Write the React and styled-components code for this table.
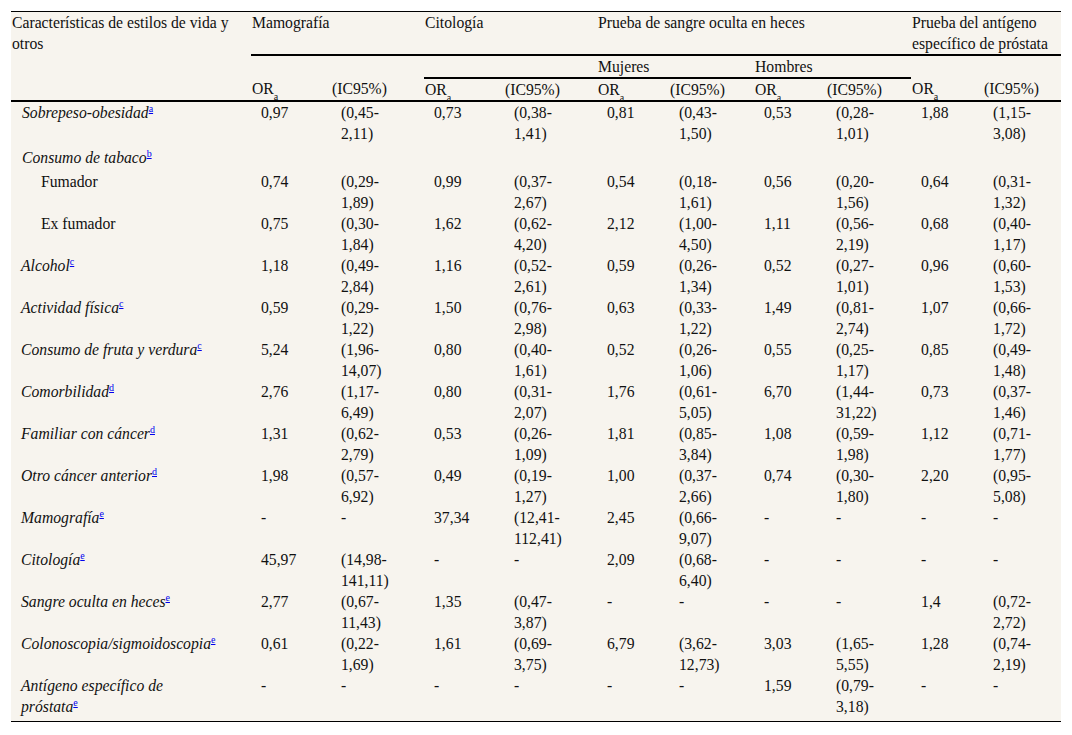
import React from "react";
import styled, { createGlobalStyle } from "styled-components";

const Global = createGlobalStyle`
  html, body { margin: 0; padding: 0; background: #ffffff; }
  body { font-family: "Liberation Serif", "Times New Roman", serif; color: #111; }
`;

const Page = styled.div`
  padding: 11px 11px;
  font-family: "Liberation Serif", "Times New Roman", serif;
`;

const Table = styled.table`
  width: 1050px;
  table-layout: fixed;
  border-collapse: collapse;
  background: #f7f4ee;
  font-family: "Liberation Serif", "Times New Roman", serif;
  font-size: 15.7px;
  line-height: 21px;
  color: #111;
  border-top: 1px solid #000;
  border-bottom: 1px solid #000;
`;

const Th = styled.th`
  font-weight: normal;
  text-align: left;
  vertical-align: top;
  padding: 0 1px;
  font-family: inherit;
  border-bottom: ${(p) => (p.$line ? "2px solid #000" : "none")};
`;

const BodyRow = styled.tr`
  & > td {
    padding-bottom: ${(p) => p.$extra || 0}px;
  }
`;

const Td = styled.td`
  vertical-align: top;
  text-align: left;
  font-family: inherit;
  padding-top: 0;
  padding-left: 10px;
  padding-right: 2px;
`;

const LabelCell = styled(Td)`
  padding-left: ${(p) => p.$indent}px;
  padding-right: 31px;
  font-style: ${(p) => (p.$italic ? "italic" : "normal")};
`;

const Sub = styled.sub`
  font-size: 10px;
  vertical-align: -6px;
  line-height: 0;
`;

const SupLink = styled.a`
  font-size: 10px;
  color: #0000ee;
  text-decoration: underline;
  vertical-align: 6px;
  line-height: 0;
  font-style: normal;
`;

const Ci = styled.span`
  display: inline-block;
  width: 54px;
`;

const cols = [240, 80, 93, 80, 93, 72, 85, 72, 85, 72, 78];

const rows = [
  { label: "Sobrepeso-obesidad", sup: "a", indent: 11, italic: true, extra: 3, v: [["0,97", "0,45", "2,11"], ["0,73", "0,38", "1,41"], ["0,81", "0,43", "1,50"], ["0,53", "0,28", "1,01"], ["1,88", "1,15", "3,08"]] },
  { label: "Consumo de tabaco", sup: "b", indent: 11, italic: true, extra: 3, v: null },
  { label: "Fumador", indent: 30, v: [["0,74", "0,29", "1,89"], ["0,99", "0,37", "2,67"], ["0,54", "0,18", "1,61"], ["0,56", "0,20", "1,56"], ["0,64", "0,31", "1,32"]] },
  { label: "Ex fumador", indent: 30, v: [["0,75", "0,30", "1,84"], ["1,62", "0,62", "4,20"], ["2,12", "1,00", "4,50"], ["1,11", "0,56", "2,19"], ["0,68", "0,40", "1,17"]] },
  { label: "Alcohol", sup: "c", indent: 10, italic: true, v: [["1,18", "0,49", "2,84"], ["1,16", "0,52", "2,61"], ["0,59", "0,26", "1,34"], ["0,52", "0,27", "1,01"], ["0,96", "0,60", "1,53"]] },
  { label: "Actividad física", sup: "c", indent: 10, italic: true, v: [["0,59", "0,29", "1,22"], ["1,50", "0,76", "2,98"], ["0,63", "0,33", "1,22"], ["1,49", "0,81", "2,74"], ["1,07", "0,66", "1,72"]] },
  { label: "Consumo de fruta y verdura", sup: "c", indent: 10, italic: true, v: [["5,24", "1,96", "14,07"], ["0,80", "0,40", "1,61"], ["0,52", "0,26", "1,06"], ["0,55", "0,25", "1,17"], ["0,85", "0,49", "1,48"]] },
  { label: "Comorbilidad", sup: "d", indent: 10, italic: true, v: [["2,76", "1,17", "6,49"], ["0,80", "0,31", "2,07"], ["1,76", "0,61", "5,05"], ["6,70", "1,44", "31,22"], ["0,73", "0,37", "1,46"]] },
  { label: "Familiar con cáncer", sup: "d", indent: 10, italic: true, v: [["1,31", "0,62", "2,79"], ["0,53", "0,26", "1,09"], ["1,81", "0,85", "3,84"], ["1,08", "0,59", "1,98"], ["1,12", "0,71", "1,77"]] },
  { label: "Otro cáncer anterior", sup: "d", indent: 10, italic: true, v: [["1,98", "0,57", "6,92"], ["0,49", "0,19", "1,27"], ["1,00", "0,37", "2,66"], ["0,74", "0,30", "1,80"], ["2,20", "0,95", "5,08"]] },
  { label: "Mamografía", sup: "e", indent: 10, italic: true, v: [["-"], ["37,34", "12,41", "112,41"], ["2,45", "0,66", "9,07"], ["-"], ["-"]] },
  { label: "Citología", sup: "e", indent: 10, italic: true, v: [["45,97", "14,98", "141,11"], ["-"], ["2,09", "0,68", "6,40"], ["-"], ["-"]] },
  { label: "Sangre oculta en heces", sup: "e", indent: 10, italic: true, v: [["2,77", "0,67", "11,43"], ["1,35", "0,47", "3,87"], ["-"], ["-"], ["1,4", "0,72", "2,72"]] },
  { label: "Colonoscopia/sigmoidoscopia", sup: "e", indent: 10, italic: true, v: [["0,61", "0,22", "1,69"], ["1,61", "0,69", "3,75"], ["6,79", "3,62", "12,73"], ["3,03", "1,65", "5,55"], ["1,28", "0,74", "2,19"]] },
  { label: "Antígeno específico de próstata", sup: "e", indent: 10, italic: true, extra: 4, v: [["-"], ["-"], ["-"], ["1,59", "0,79", "3,18"], ["-"]] },
];

const Or = () => (
  <>
    OR<Sub>a</Sub>
  </>
);

function Pair({ v }) {
  if (v.length === 1) {
    return (
      <>
        <Td>-</Td>
        <Td>-</Td>
      </>
    );
  }
  return (
    <>
      <Td>{v[0]}</Td>
      <Td>
        <Ci>
          ({v[1]}-<wbr />
          {v[2]})
        </Ci>
      </Td>
    </>
  );
}

export default function App() {
  return (
    <Page>
      <Global />
      <Table>
        <colgroup>
          {cols.map((w, i) => (
            <col key={i} style={{ width: w }} />
          ))}
        </colgroup>
        <thead>
          <tr>
            <Th rowSpan={3} $line>
              Características de estilos de vida y otros
            </Th>
            <Th colSpan={2} $line>Mamografía</Th>
            <Th colSpan={2} $line>Citología</Th>
            <Th colSpan={4} $line>Prueba de sangre oculta en heces</Th>
            <Th colSpan={2} $line>Prueba del antígeno específico de próstata</Th>
          </tr>
          <tr>
            <Th colSpan={2} />
            <Th colSpan={2} $line />
            <Th colSpan={2} $line>Mujeres</Th>
            <Th colSpan={2} $line>Hombres</Th>
            <Th colSpan={2} />
          </tr>
          <tr>
            {[0, 1, 2, 3, 4].map((i) => (
              <React.Fragment key={i}>
                <Th $line>
                  <Or />
                </Th>
                <Th $line>(IC95%)</Th>
              </React.Fragment>
            ))}
          </tr>
        </thead>
        <tbody>
          {rows.map((r, i) => (
            <BodyRow key={i} $extra={r.extra}>
              <LabelCell $indent={r.indent} $italic={r.italic}>
                {r.label}
                {r.sup && <SupLink href="#">{r.sup}</SupLink>}
              </LabelCell>
              {r.v ? (
                r.v.map((v, j) => <Pair key={j} v={v} />)
              ) : (
                <Td colSpan={10} />
              )}
            </BodyRow>
          ))}
        </tbody>
      </Table>
    </Page>
  );
}
